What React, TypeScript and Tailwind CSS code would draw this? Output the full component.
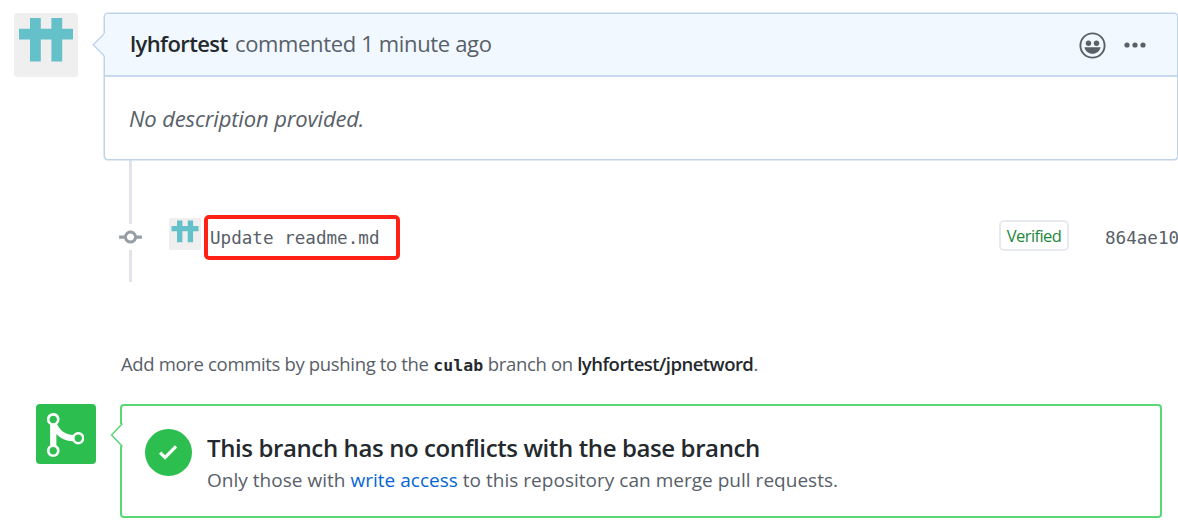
function Identicon({ className }: { className: string }) {
  return (
    <svg viewBox="0 0 64 64" className={className}>
      <rect width="64" height="64" rx="3.5" fill="#efefef" />
      <path fill="#64c0c9" d="M16 5h10.8v10.8h10.6V5h10.8v10.8H59v10.8H48.2v21.8H37.4V26.6H26.8v21.8H16V26.6H5V15.8h11z" />
    </svg>
  );
}

function Comment() {
  return (
    <section className="flex h-[147px] items-start pl-3.5">
      <Identicon className="h-16 w-16 shrink-0" />
      <div className="relative ml-[26px] h-[147px] w-[1074px] shrink-0 rounded-[4px] border-[1.5px] border-[#c0d3eb] bg-white shadow-[0_0_0_0.5px_#c0d3eb]">
        <svg className="absolute -left-[13px] top-[18px] h-[26px] w-[14px]" viewBox="0 0 14 26">
          <path d="M13 1 1.200 12.700 13 24.400" fill="#f1f8ff" stroke="#c0d3eb" strokeWidth="1.4" />
          <path d="M13 1.800v21.800" stroke="#f1f8ff" strokeWidth="2" />
        </svg>
        <header className="flex h-[63px] items-center justify-between rounded-t-[3px] border-b-2 border-[#c8daee] bg-[#f1f8ff] pl-[25px] pr-[31px]">
          <p className="-mt-[3px] whitespace-nowrap text-[22px] leading-[30px] text-[#586069]">
            <strong className="inline-block w-[105px] font-semibold tracking-[-0.6px] text-[#24292e]">lyhfortest</strong>
            <span className="tracking-[-0.35px]">commented 1 minute ago</span>
          </p>
          <div className="flex items-center gap-[18px] text-[#586069]">
            <svg className="mt-0.5 h-[27px] w-[27px]" viewBox="0 0 27 27">
              <circle cx="13.5" cy="13.5" r="12.1" fill="none" stroke="currentColor" strokeWidth="1.9" />
              <circle cx="9.5" cy="11.2" r="2.7" fill="currentColor" />
              <circle cx="17.5" cy="11.2" r="2.7" fill="currentColor" />
              <path d="M5.4 15.2h16.2c-1 4.2-4.2 6.5-8.1 6.5s-7.1-2.3-8.1-6.5z" fill="currentColor" />
            </svg>
            <svg className="mt-px h-[6px] w-[22px]" viewBox="0 0 22 6" fill="currentColor">
              <circle cx="3" cy="3" r="2.6" />
              <circle cx="11" cy="3" r="2.6" />
              <circle cx="19" cy="3" r="2.6" />
            </svg>
          </div>
        </header>
        <p className="whitespace-nowrap pl-6 pt-[26px] text-[22px] italic leading-[30px] tracking-[-0.14px] text-[#586069]">
          No description provided.
        </p>
      </div>
    </section>
  );
}

function Commit() {
  return (
    <section className="flex h-[122px] pl-[119px]">
      <div className="flex w-[23px] shrink-0 flex-col items-center">
        <div className="h-16 w-[3px] bg-[#e1e4e8]" />
        <svg className="h-[26px] w-[23px]" viewBox="0 0 14 16" fill="#959da5">
          <path d="M10.86 7c-.45-1.72-2-3-3.86-3-1.86 0-3.41 1.28-3.86 3H0v2h3.14c.45 1.72 2 3 3.86 3 1.86 0 3.41-1.28 3.86-3H14V7h-3.14zM7 10.2c-1.22 0-2.2-.98-2.2-2.2 0-1.22.98-2.2 2.2-2.2 1.22 0 2.2.98 2.2 2.2 0 1.22-.98 2.2-2.2 2.2z" />
        </svg>
        <div className="h-8 w-[3px] bg-[#e1e4e8]" />
      </div>
      <Identicon className="ml-[27px] mt-[58px] h-8 w-8 shrink-0" />
      <div className="ml-[3px] mt-[55px] flex h-[45px] w-[196px] shrink-0 items-center rounded-[5px] border-4 border-[#ff2116] pl-[2px]">
        <span className="whitespace-nowrap font-['DejaVu_Sans_Mono',monospace] text-[17.6px] leading-6 text-[#586069]">
          Update readme.md
        </span>
      </div>
      <div className="ml-[599px] mt-[60px] flex h-[31px] w-[70px] shrink-0 items-center justify-center rounded-[5px] border-2 border-[#e7eaef] pt-[2px] text-[16.5px] tracking-[-0.6px] text-[#22863a]">
        Verified
      </div>
      <span className="ml-9 mt-[66px] whitespace-nowrap font-['DejaVu_Sans_Mono',monospace] text-[17.6px] leading-6 text-[#586069]">
        864ae10
      </span>
    </section>
  );
}

function MergeStatus() {
  return (
    <section className="flex pl-9">
      <div className="flex h-[60px] w-[60px] shrink-0 justify-center rounded-[4px] bg-[#2cbe4e] pr-px pt-[6px]">
        <svg className="h-[50px] w-[37.5px]" viewBox="0 0 12 16" fill="white">
          <path d="M10 7c-.73 0-1.38.41-1.73 1.02V8C7.22 7.98 6 7.64 5.14 6.98c-.75-.58-1.5-1.61-1.89-2.44A1.993 1.993 0 0 0 2 .99C.89.99 0 1.89 0 3a2 2 0 0 0 1 1.72v6.56c-.59.35-1 .99-1 1.72 0 1.11.89 2 2 2a1.993 1.993 0 0 0 1-3.72V7.67c.67.7 1.44 1.27 2.3 1.69.86.42 2.03.63 2.97.64v-.02c.36.61 1 1.02 1.73 1.02 1.11 0 2-.89 2-2 0-1.11-.89-2-2-2zm-6.8 6c0 .66-.55 1.2-1.2 1.2-.65 0-1.2-.55-1.2-1.2 0-.65.55-1.2 1.2-1.2.65 0 1.2.55 1.2 1.2zM2 4.2C1.34 4.2.8 3.65.8 3c0-.65.55-1.2 1.2-1.2.65 0 1.2.55 1.2 1.2 0 .65-.55 1.2-1.2 1.2zm8 6c-.66 0-1.2-.55-1.2-1.2 0-.65.55-1.2 1.2-1.2.65 0 1.2.55 1.2 1.2 0 .65-.55 1.2-1.2 1.2z" />
        </svg>
      </div>
      <div className="relative ml-6 flex h-[114px] w-[1042px] shrink-0 rounded-[4px] border-2 border-[#58d774] pl-[23px] pt-[23px]">
        <svg className="absolute -left-[12px] top-[16px] h-[26px] w-[14px]" viewBox="0 0 14 26">
          <path d="M12 2v22" stroke="white" strokeWidth="4" />
          <path d="M12.500 1.500 1.500 13l11 11.500" fill="white" stroke="#58d774" strokeWidth="1.5" />
        </svg>
        <div className="flex h-[47px] w-[47px] shrink-0 justify-center rounded-full bg-[#2cbe4e] pt-[10.500px]">
          <svg className="h-[24.300px] w-[18.200px]" viewBox="0 0 12 16" fill="white">
            <path d="M12 5l-8 8-4-4 1.5-1.5L4 10l6.500-6.500L12 5z" />
          </svg>
        </div>
        <div className="ml-[15px] whitespace-nowrap">
          <h3 className="mt-[2px] text-[24px] font-semibold leading-[34px] tracking-[-0.39px] text-[#24292e]">
            This branch has no conflicts with the base branch
          </h3>
          <p className="text-[19px] leading-[30px] tracking-[0.02px] text-[#586069]">
            Only those with <a className="text-[#0366d6]">write access</a> to this repository can merge pull requests.
          </p>
        </div>
      </div>
    </section>
  );
}

export default function App() {
  return (
    <main className="h-[530px] w-[1178px] overflow-hidden bg-white pt-[13px] font-['Open_Sans','Noto_Sans',sans-serif]">
      <Comment />
      <Commit />
      <p className="mb-[26px] mt-[67px] h-[29px] whitespace-nowrap pl-[121px] text-[18.500px] leading-[29px] tracking-[-0.34px] text-[#586069]">
        Add more commits by pushing to the{" "}
        <b className="font-['DejaVu_Sans_Mono',monospace] text-[16.500px] tracking-[0.1px] text-[#24292e]">culab</b>
        {" "}branch on{" "}
        <strong className="font-semibold tracking-[-0.52px] text-[#24292e]">lyhfortest/jpnetword</strong>.
      </p>
      <MergeStatus />
    </main>
  );
}
